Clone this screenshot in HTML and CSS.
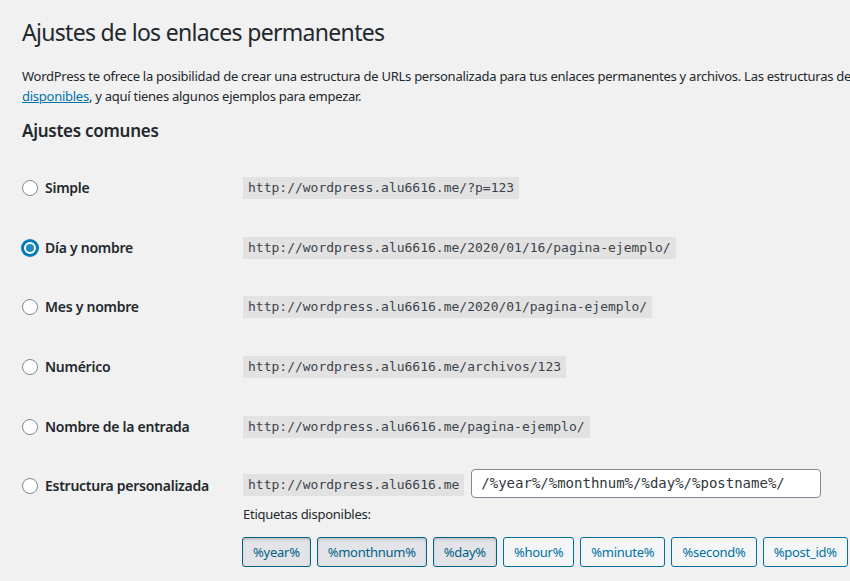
FILE: index.html
```html
<!DOCTYPE html>
<html lang="es">
<head>
<meta charset="utf-8">
<title>Ajustes de los enlaces permanentes</title>
<link rel="stylesheet" href="styles.css">
</head>
<body>
<div class="wrap">
  <h1 class="title">Ajustes de los enlaces permanentes</h1>
  <p class="intro">WordPress te ofrece la posibilidad de crear una estructura de URLs personalizada para tus enlaces permanentes y archivos. Las estructuras de<br><a href="#">disponibles</a>, y aquí tienes algunos ejemplos para empezar.</p>
  <h2 class="subtitle">Ajustes comunes</h2>

  <div class="rows">
    <div class="row">
      <label class="opt"><span class="radio"></span><span class="opt-text">Simple</span></label>
      <div class="val"><code class="code">http://wordpress.alu6616.me/?p=123</code></div>
    </div>
    <div class="row">
      <label class="opt"><span class="radio checked"></span><span class="opt-text">Día y nombre</span></label>
      <div class="val"><code class="code">http://wordpress.alu6616.me/2020/01/16/pagina-ejemplo/</code></div>
    </div>
    <div class="row">
      <label class="opt"><span class="radio"></span><span class="opt-text">Mes y nombre</span></label>
      <div class="val"><code class="code">http://wordpress.alu6616.me/2020/01/pagina-ejemplo/</code></div>
    </div>
    <div class="row">
      <label class="opt"><span class="radio"></span><span class="opt-text">Numérico</span></label>
      <div class="val"><code class="code">http://wordpress.alu6616.me/archivos/123</code></div>
    </div>
    <div class="row">
      <label class="opt"><span class="radio"></span><span class="opt-text">Nombre de la entrada</span></label>
      <div class="val"><code class="code">http://wordpress.alu6616.me/pagina-ejemplo/</code></div>
    </div>
    <div class="row row-custom">
      <label class="opt"><span class="radio"></span><span class="opt-text">Estructura personalizada</span></label>
      <div class="val val-custom">
        <div class="custom-line">
          <code class="code code-base">http://wordpress.alu6616.me</code>
          <input class="struct-input" type="text" value="/%year%/%monthnum%/%day%/%postname%/">
        </div>
        <p class="tags-label">Etiquetas disponibles:</p>
        <div class="tags">
          <button class="tag active">%year%</button>
          <button class="tag active">%monthnum%</button>
          <button class="tag active">%day%</button>
          <button class="tag">%hour%</button>
          <button class="tag">%minute%</button>
          <button class="tag">%second%</button>
          <button class="tag">%post_id%</button>
        </div>
      </div>
    </div>
  </div>
</div>
</body>
</html>
```
FILE: styles.css
```css
html, body {
  margin: 0;
  padding: 0;
  background: #f1f1f1;
  overflow: hidden;
}
body {
  font-family: "Noto Sans", "Open Sans", sans-serif;
  font-size: 13px;
  color: #23282d;
  line-height: 1.4;
  letter-spacing: -0.02em;
}
.wrap {
  padding: 0 0 0 22px;
}
.title {
  font-size: 23px;
  font-weight: 400;
  line-height: 1.3;
  margin: 0;
  padding: 18px 0 0;
  color: #23282d;
  letter-spacing: -0.03em;
}
.intro {
  margin: 18px 0 0;
  line-height: 20px;
  white-space: nowrap;
}
.intro a {
  color: #0073aa;
  text-decoration: underline;
}
.subtitle {
  font-size: 17px;
  font-weight: 600;
  margin: 13px 0 0;
  line-height: 24px;
}
.rows {
  margin-top: 15px;
  display: flex;
  flex-direction: column;
}
.row {
  display: flex;
  align-items: center;
  height: 59.75px;
}
.opt {
  width: 221px;
  flex: none;
  display: flex;
  align-items: center;
  gap: 7px;
  font-size: 14px;
  font-weight: 600;
  color: #23282d;
}
.radio {
  width: 16px;
  height: 16px;
  box-sizing: border-box;
  border: 1px solid #7e8993;
  border-radius: 50%;
  background: #fff;
  flex: none;
  display: flex;
  align-items: center;
  justify-content: center;
}
.radio.checked {
  border: 2px solid #007cba;
  box-shadow: 0 0 0 1px #007cba;
}
.radio.checked::after {
  content: "";
  width: 8px;
  height: 8px;
  border-radius: 50%;
  background: #1e8cbe;
}
.code {
  font-family: "DejaVu Sans Mono", monospace;
  font-size: 13px;
  letter-spacing: 0;
  background: #e2e2e2;
  padding: 3px 5px 3px;
  line-height: 16px;
  display: inline-block;
  color: #3c434a;
}
.row-custom {
  align-items: flex-start;
  height: auto;
  padding-top: 12px;
}
.row-custom .opt {
  height: 30px;
  margin-top: 2px;
}
.custom-line {
  display: flex;
  align-items: flex-start;
  gap: 7px;
}
.code-base {
  margin-top: 5px;
}
.struct-input {
  width: 350px;
  height: 29px;
  box-sizing: border-box;
  border: 1px solid #7e8993;
  border-radius: 4px;
  background: #fff;
  font-family: "DejaVu Sans Mono", monospace;
  font-size: 14px;
  letter-spacing: 0;
  color: #32373c;
  padding: 0 9px;
  margin: 0;
}
.tags-label {
  margin: 7px 0 0;
  line-height: 18px;
}
.tags {
  display: flex;
  gap: 6px;
  margin-top: 14px;
  margin-left: -1px;
}
.tag {
  font-family: "Noto Sans", "Open Sans", sans-serif;
  font-size: 13px;
  letter-spacing: -0.02em;
  height: 30px;
  padding: 0 10px;
  border-radius: 3px;
  border: 1px solid #0071a1;
  background: #f3f5f6;
  color: #0071a1;
  margin: 0;
}
.tag.active {
  background: #e2e4e7;
  border-color: #016087;
  color: #016087;
  box-shadow: inset 0 2px 5px -3px rgba(0, 0, 0, 0.5);
}
```
